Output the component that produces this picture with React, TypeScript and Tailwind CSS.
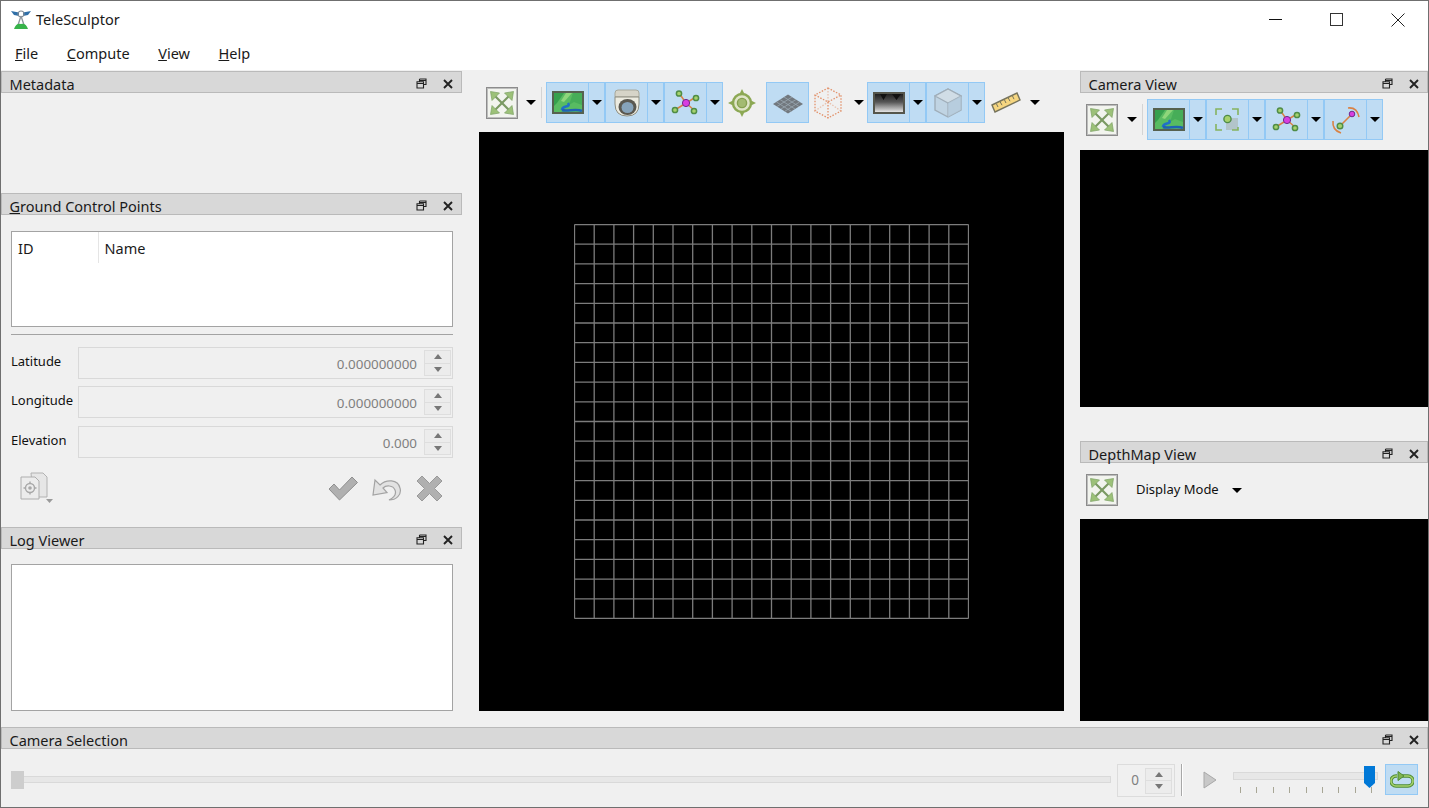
import React from 'react';

const FitIcon = () => (
  <svg width="32" height="32" viewBox="0 0 32 32" className="shrink-0">
    <rect x="0.5" y="0.5" width="31" height="31" fill="#f2f4ee" stroke="#8c8c8c" />
    <rect x="1.5" y="1.5" width="29" height="29" fill="none" stroke="#bdbdbd" />
    <g stroke="#7b9a63" strokeWidth="2.2" fill="none">
      <path d="M9 9 L23 23" />
      <path d="M23 9 L9 23" />
    </g>
    <g fill="#9cc178" stroke="#7da265" strokeWidth="0.7">
      <path d="M4.5 4.5 L13.5 6 L6 13.5 Z" />
      <path d="M27.5 4.5 L26 13.5 L18.5 6 Z" />
      <path d="M4.5 27.5 L6 18.5 L13.5 26 Z" />
      <path d="M27.5 27.5 L18.5 26 L26 18.5 Z" />
    </g>
  </svg>
);

const MapIcon = () => (
  <svg width="32" height="23" viewBox="0 0 32 23">
    <rect x="1" y="1" width="30" height="21" fill="#58bb62" stroke="#56614f" strokeWidth="2" />
    <path d="M2 2 L12 2 L5 12 L2 15 Z" fill="#36a04e" />
    <path d="M14 2 L20 2 L12 11 L9 10 Z" fill="#8ed67b" />
    <path d="M21 2 L30 2 L30 14 L22 11 L17 14 Z" fill="#46ad58" />
    <path d="M10 19 C10 14 19 17 16 12" fill="none" stroke="#2170c8" strokeWidth="2.6" />
    <path d="M10 19 C15 21 24 17 30 20" fill="none" stroke="#1f62b4" strokeWidth="2.6" />
  </svg>
);

const DomeIcon = () => (
  <svg width="28" height="28" viewBox="0 0 28 28">
    <path d="M2 4 Q2 1 5 1 L23 1 Q26 1 26 4 L26 8 L2 8 Z" fill="#d6d4c8" stroke="#a8a89a" />
    <path d="M2 8 L26 8 L26 15 Q26 27 14 27 Q2 27 2 15 Z" fill="#ecebe0" stroke="#8d8d80" />
    <ellipse cx="14.5" cy="18" rx="9" ry="8" fill="#5a5850" />
    <ellipse cx="14.5" cy="18.5" rx="6" ry="5.5" fill="#86a3ba" />
  </svg>
);

const NetworkIcon = () => (
  <svg width="30" height="26" viewBox="0 0 30 26">
    <g stroke="#d98245" strokeWidth="1.5">
      <path d="M15 13 L8 3" />
      <path d="M15 13 L25 7" />
      <path d="M15 13 L4 20" />
      <path d="M15 13 L24 21" />
    </g>
    <g fill="#a6d26d" stroke="#4f8c46" strokeWidth="1.5">
      <circle cx="8" cy="3.5" r="2.6" />
      <circle cx="25" cy="8" r="2.6" />
      <circle cx="4" cy="20" r="2.6" />
      <circle cx="23" cy="21" r="2.6" />
    </g>
    <circle cx="15" cy="13" r="3.6" fill="#d83ee0" stroke="#6e2a8a" />
  </svg>
);

const TargetIcon = () => (
  <svg width="28" height="28" viewBox="0 0 28 28">
    <g fill="#8ca854">
      <path d="M14 0 L17 6 L11 6 Z" />
      <path d="M14 28 L17 22 L11 22 Z" />
      <path d="M0 14 L6 11 L6 17 Z" />
      <path d="M28 14 L22 11 L22 17 Z" />
    </g>
    <circle cx="14" cy="14" r="9" fill="#dfe5c8" stroke="#8ca854" strokeWidth="2.4" />
    <circle cx="14" cy="14" r="4.6" fill="#a3bb72" stroke="#86a050" strokeWidth="1.4" />
  </svg>
);

const GridIcon = () => (
  <svg width="32" height="20" viewBox="0 0 32 20">
    <path d="M16 0.5 L31 10 L16 19.5 L1 10 Z" fill="#72787e" />
    <g stroke="#9aa8b3" strokeWidth="0.8">
      <path d="M12 3 L27 12.5" />
      <path d="M8 5.5 L23 15" />
      <path d="M4.5 8 L19.5 17.5" />
      <path d="M20 3 L5 12.5" />
      <path d="M24 5.5 L9 15" />
      <path d="M27.5 8 L12.5 17.5" />
    </g>
  </svg>
);

const WireCubeIcon = () => (
  <svg width="30" height="32" viewBox="0 0 30 32">
    <g fill="none" stroke="#e2916a" strokeWidth="1.3" strokeDasharray="1.5 1.5">
      <path d="M15 1 L28 8 L28 24 L15 31 L2 24 L2 8 Z" />
      <path d="M2 8 L15 15 L28 8" />
      <path d="M15 15 L15 31" />
      <path d="M15 1 L15 15 M2 24 L15 15 L28 24" opacity="0.5" />
    </g>
  </svg>
);

const DepthIcon = () => (
  <svg width="32" height="22" viewBox="0 0 32 22">
    <defs>
      <linearGradient id="depth" x1="0" y1="0" x2="0" y2="1">
        <stop offset="0" stopColor="#1a1a1a" />
        <stop offset="0.45" stopColor="#555" />
        <stop offset="1" stopColor="#f2f2f2" />
      </linearGradient>
    </defs>
    <rect x="1" y="1" width="30" height="20" fill="url(#depth)" stroke="#55564c" strokeWidth="2" />
    <path d="M7 2 L14 2 L10.5 8 Z M19 2 L28 2 L23.5 8 Z" fill="#111" />
  </svg>
);

const SolidCubeIcon = () => (
  <svg width="28" height="30" viewBox="0 0 28 30">
    <path d="M14 1 L27 8 L27 22 L14 29 L1 22 L1 8 Z" fill="#c0d4e3" stroke="#a0aeb9" strokeWidth="1.4" />
    <path d="M1 8 L14 15 L27 8 L14 1 Z" fill="#d0dde6" stroke="#a0aeb9" strokeWidth="1.2" />
    <path d="M14 15 L14 29" stroke="#a0aeb9" strokeWidth="1.2" />
    <path d="M14 15 L27 8 L27 22 L14 29 Z" fill="#b4cadb" opacity="0.7" />
  </svg>
);

const RulerIcon = () => (
  <svg width="30" height="22" viewBox="0 0 30 22">
    <path d="M1 13 L26 1 L29 8 L4 20 Z" fill="#f6d680" stroke="#77745c" strokeWidth="1.4" />
    <g stroke="#77745c" strokeWidth="1">
      <path d="M7 15 L5.5 12" />
      <path d="M11 13.2 L9 9.5" />
      <path d="M15 11 L13.5 8" />
      <path d="M19 9.2 L17 5.5" />
      <path d="M23 7.2 L21.5 4" />
    </g>
  </svg>
);

const FeatureIcon = () => (
  <svg width="28" height="26" viewBox="0 0 28 26">
    <rect x="12" y="11" width="12" height="12" fill="#a8b0a8" opacity="0.55" />
    <g fill="none" stroke="#86b35f" strokeWidth="1.6">
      <path d="M2 8 L2 2 L8 2" />
      <path d="M18 2 L24 2 L24 8" />
      <path d="M2 17 L2 23 L8 23" />
      <path d="M18 23 L24 23 L24 20" />
    </g>
    <circle cx="13.5" cy="12" r="3.6" fill="#a6d26d" stroke="#4f8c46" strokeWidth="1.4" />
  </svg>
);

const RangeIcon = () => (
  <svg width="30" height="28" viewBox="0 0 30 28">
    <path d="M17 2 Q26 1 28 11" fill="none" stroke="#d98245" strokeWidth="1.6" />
    <path d="M2 15 Q1 24 10 27" fill="none" stroke="#d98245" strokeWidth="1.6" />
    <path d="M9 20 L21 8" stroke="#d98245" strokeWidth="1.6" />
    <circle cx="9" cy="20" r="2.8" fill="#a6d26d" stroke="#4f8c46" strokeWidth="1.4" />
    <circle cx="21" cy="8" r="2.8" fill="#d83ee0" stroke="#6e2a8a" strokeWidth="1" />
  </svg>
);

const Caret = () => (
  <svg width="10" height="5" viewBox="0 0 10 5" className="shrink-0">
    <path d="M0 0 L10 0 L5 5 Z" fill="#000" />
  </svg>
);

const DockTitle = ({ title, underlineFirst }: { title: string; underlineFirst?: boolean }) => (
  <div className="h-[22px] shrink-0 flex items-start border border-[#bababa] bg-[#d8d8d8]">
    <span className="ml-[7.5px] mt-[2px] text-[14.5px] leading-[20px] text-[#1a1a1a] whitespace-nowrap">
      {underlineFirst ? (
        <>
          <span className="underline">{title[0]}</span>
          {title.slice(1)}
        </>
      ) : (
        title
      )}
    </span>
    <div className="ml-auto flex items-center gap-[16px] mr-[8px] mt-[6px]">
      <svg width="11" height="11" viewBox="0 0 11 11">
        <path d="M3.5 1 H10 V6.5 H8 M1 3.8 H7.5 V10 H1 Z M1 5.5 H7.5 M3.5 1 V3.5 M3.5 2.5 H10" fill="none" stroke="#222" strokeWidth="1.1" />
      </svg>
      <svg width="10" height="10" viewBox="0 0 10 10">
        <path d="M1 1 L9 9 M9 1 L1 9" stroke="#222" strokeWidth="1.9" />
      </svg>
    </div>
  </div>
);

// checked tool button with its menu arrow
const CheckedButton = ({ icon }: { icon: React.ReactNode }) => (
  <div className="flex h-[41px] bg-[#bfdcf3] border border-[#93c9f5] w-[59px] shrink-0">
    <div className="w-[42px] flex items-center justify-center border-r border-[#93c9f5]">{icon}</div>
    <div className="flex-1 flex items-center justify-center">
      <Caret />
    </div>
  </div>
);

const Spin = () => (
  <div className="w-[27px] h-[26px] flex flex-col border border-[#dedede] bg-[#ececec]">
    <div className="flex-1 flex items-center justify-center border-b border-[#dedede]">
      <svg width="8" height="5" viewBox="0 0 8 5">
        <path d="M4 0 L8 5 L0 5 Z" fill="#777" />
      </svg>
    </div>
    <div className="flex-1 flex items-center justify-center">
      <svg width="8" height="5" viewBox="0 0 8 5">
        <path d="M0 0 L8 0 L4 5 Z" fill="#777" />
      </svg>
    </div>
  </div>
);

const CoordRow = ({ label, value, className }: { label: string; value: string; className?: string }) => (
  <div className={`flex items-start h-[32px] ${className ?? ''}`}>
    <span className="w-[67px] shrink-0 text-[13px] leading-[20px] mt-[4px] text-[#111] whitespace-nowrap">{label}</span>
    <div className="flex items-center justify-end w-[375px] h-[32px] shrink-0 border border-[#d9d9d9] bg-[#f0f0f0] pr-[1px]">
      <span className="text-[13.4px] text-[#7f7f7f] mr-[7px] mt-[2px]">{value}</span>
      <Spin />
    </div>
  </div>
);

const CoordGrid = () => {
  const lines = Array.from({ length: 21 }, (_, i) => 0.5 + i * 19.7);
  return (
    <svg width="395" height="395" viewBox="0 0 395 395">
      {lines.map((p) => (
        <g key={p} stroke="#7c7c7c" strokeWidth="1.3">
          <path d={`M${p} 0.5 V394.5`} />
          <path d={`M0.5 ${p} H394.5`} />
        </g>
      ))}
    </svg>
  );
};

export default function App() {
  return (
    <div
      className="w-[1429px] h-[808px] flex flex-col overflow-hidden border border-[#6f6f6f] bg-[#f0f0f0] text-[#1a1a1a]"
      style={{ fontFamily: '"Noto Sans", "Open Sans", sans-serif' }}
    >
      {/* Title bar */}
      <div className="h-[35px] shrink-0 bg-white flex items-center pt-[2px]">
        <svg width="20" height="20" viewBox="0 0 20 20" className="ml-[10px]">
          <path d="M0 1 L8 2.5 L8 6 L3 5 Z M20 1 L12 2.5 L12 6 L17 5 Z" fill="#2f6fa8" />
          <circle cx="10" cy="4" r="3" fill="none" stroke="#7d8a96" strokeWidth="1.2" />
          <path d="M10 6 L7 15 M10 6 L13 15" stroke="#8b949c" strokeWidth="1.3" />
          <path d="M3 19 Q5 13 10 14 Q15 13 17 19 Z" fill="#37b34a" />
        </svg>
        <span className="ml-[5px] text-[14.5px] text-[#1a1a1a]">TeleSculptor</span>
        <div className="ml-auto flex items-center">
          <div className="w-[61px] flex justify-center">
            <div className="w-[13px] h-px bg-[#111]" />
          </div>
          <div className="w-[61px] flex justify-center">
            <div className="w-[13px] h-[13px] border border-[#333]" />
          </div>
          <div className="w-[61px] flex justify-center">
            <svg width="14" height="14" viewBox="0 0 14 14">
              <path d="M0.5 0.5 L13.5 13.5 M13.5 0.5 L0.5 13.5" stroke="#222" strokeWidth="1" />
            </svg>
          </div>
        </div>
      </div>

      {/* Menu bar */}
      <div className="h-[34px] shrink-0 bg-white flex items-center pl-[14px] gap-[28.6px] text-[14.5px] pt-[2px]">
        {['File', 'Compute', 'View', 'Help'].map((m) => (
          <span key={m}>
            <span className="underline">{m[0]}</span>
            {m.slice(1)}
          </span>
        ))}
      </div>

      <div className="h-[657px] shrink-0 flex">
        {/* Left docks */}
        <div className="w-[461px] mr-px shrink-0 flex flex-col pt-px">
          <DockTitle title="Metadata" />
          <div className="h-[100px] shrink-0" />
          <DockTitle title="Ground Control Points" underlineFirst />
          <div className="h-[312px] shrink-0 pl-[10px] pr-[9px] pt-[16px] flex flex-col">
            <div className="h-[96px] shrink-0 bg-white border border-[#a3a3a3] flex items-start">
              <div className="w-[87px] h-[31px] border-r border-[#e5e5e5] pl-[6px] pt-[6px] text-[14.5px] leading-[20px]">ID</div>
              <div className="pl-[5.5px] pt-[6px] text-[14.5px] leading-[20px]">Name</div>
            </div>
            <div className="h-px shrink-0 bg-[#a3a3a3] mt-[7px]" />
            <CoordRow label="Latitude" value="0.000000000" className="mt-[12px]" />
            <CoordRow label="Longitude" value="0.000000000" className="mt-[7px]" />
            <CoordRow label="Elevation" value="0.000" className="mt-[8px]" />
            <div className="flex items-start mt-[14px] pl-[9px]">
              <div className="relative">
                <svg width="28" height="28" viewBox="0 0 28 28">
                  <path d="M11 1 H23 L27 5 V25 H13 Z" fill="#e6e6e6" stroke="#b2b2b2" />
                  <path d="M1 5 H15 L19 9 V27 H1 Z" fill="#ececec" stroke="#aeaeae" />
                  <circle cx="10" cy="16" r="4.5" fill="none" stroke="#a8a8a8" strokeWidth="1.4" />
                  <circle cx="10" cy="16" r="1.8" fill="#a8a8a8" />
                  <path d="M10 9.5 V11.5 M10 20.5 V22.5 M3.5 16 H5.5 M14.5 16 H16.5" stroke="#a8a8a8" strokeWidth="1.4" />
                </svg>
                <svg width="7" height="4" viewBox="0 0 7 4" className="absolute left-[26px] top-[27px]">
                  <path d="M0 0 H7 L3.5 4 Z" fill="#9a9a9a" />
                </svg>
              </div>
              <div className="ml-auto flex items-center gap-[14px] mr-[10px] mt-[3px]">
                <svg width="30" height="25" viewBox="0 0 30 25">
                  <path d="M1 13 L6 8 L11.5 14 L24 1 L29.5 6.5 L11.5 24 Z" fill="#b0b0b0" stroke="#8f8f8f" />
                </svg>
                <svg width="30" height="24" viewBox="0 0 30 24">
                  <path d="M1 18 L3 3 L8 8 C14 2 26 2 28 11 C30 18 24 23 17 23 C21 21 25 18 23 13 C21 8 14 8 11 11 L15 15.5 Z" fill="#e2e2e2" stroke="#a3a3a3" strokeWidth="1.2" />
                </svg>
                <svg width="27" height="27" viewBox="0 0 27 27">
                  <path d="M1 6 L6 1 L13.5 8.5 L21 1 L26 6 L18.5 13.5 L26 21 L21 26 L13.5 18.5 L6 26 L1 21 L8.5 13.5 Z" fill="#b0b0b0" stroke="#999" />
                </svg>
              </div>
            </div>
          </div>
          <DockTitle title="Log Viewer" />
          <div className="pl-[10px] pr-[9px] pt-[15px]">
            <div className="h-[147px] bg-white border border-[#a3a3a3]" />
          </div>
        </div>

        {/* Center view */}
        <div className="w-[585px] shrink-0 ml-[16px] flex flex-col">
          <div className="h-[41px] mt-[12px] shrink-0 flex items-center">
            <div className="ml-[7px]">
              <FitIcon />
            </div>
            <div className="w-[18px] flex justify-end shrink-0">
              <Caret />
            </div>
            <div className="w-px h-[31px] bg-[#d4d4d4] ml-[5px] shrink-0" />
            <div className="flex ml-[4px] shrink-0">
              <CheckedButton icon={<MapIcon />} />
              <CheckedButton icon={<DomeIcon />} />
              <CheckedButton icon={<NetworkIcon />} />
            </div>
            <div className="ml-[5px] shrink-0">
              <TargetIcon />
            </div>
            <div className="w-[43px] h-[41px] ml-[10px] shrink-0 bg-[#bfdcf3] border border-[#93c9f5] flex items-center justify-center pt-[3px]">
              <GridIcon />
            </div>
            <div className="ml-[4px] shrink-0">
              <WireCubeIcon />
            </div>
            <div className="ml-[11px] shrink-0">
              <Caret />
            </div>
            <div className="flex ml-[3px] shrink-0">
              <CheckedButton icon={<DepthIcon />} />
              <CheckedButton icon={<SolidCubeIcon />} />
            </div>
            <div className="ml-[6px] shrink-0">
              <RulerIcon />
            </div>
            <div className="ml-[9px] shrink-0">
              <Caret />
            </div>
          </div>
          <div className="h-[579px] mt-[9px] shrink-0 bg-black flex items-center justify-center pr-px">
            <CoordGrid />
          </div>
        </div>

        {/* Right docks */}
        <div className="w-[348px] shrink-0 ml-[16px] flex flex-col pt-px">
          <DockTitle title="Camera View" />
          <div className="h-[41px] mt-[6px] shrink-0 flex items-center">
            <div className="ml-[6px]">
              <FitIcon />
            </div>
            <div className="w-[19px] flex justify-end shrink-0">
              <Caret />
            </div>
            <div className="w-px h-[31px] bg-[#d4d4d4] ml-[5px] shrink-0" />
            <div className="flex ml-[4px] shrink-0">
              <CheckedButton icon={<MapIcon />} />
              <CheckedButton icon={<FeatureIcon />} />
              <CheckedButton icon={<NetworkIcon />} />
              <CheckedButton icon={<RangeIcon />} />
            </div>
          </div>
          <div className="h-[257px] mt-[10px] shrink-0 bg-black" />
          <div className="h-[34px] shrink-0" />
          <DockTitle title="DepthMap View" />
          <div className="h-[56px] shrink-0 flex items-center pb-[2px]">
            <div className="ml-[6px]">
              <FitIcon />
            </div>
            <span className="ml-[18px] text-[13px] text-[#111] whitespace-nowrap">Display Mode</span>
            <div className="ml-[13px]">
              <Caret />
            </div>
          </div>
          <div className="h-[202px] shrink-0 bg-black" />
        </div>
      </div>

      {/* Camera selection dock */}
      <div className="flex-1 flex flex-col">
        <DockTitle title="Camera Selection" />
        <div className="flex-1 flex items-start pl-[10px] pt-[15px]">
          <div className="relative w-[1100px] h-[32px] shrink-0 flex items-center">
            <div className="w-full h-[7px] mb-[1px] bg-[#e7e7e7] border border-[#d9d9d9]" />
            <div className="absolute left-0 top-[7px] w-[13px] h-[18px] bg-[#cdcdcd]" />
          </div>
          <div className="w-[58px] h-[33px] ml-[6px] shrink-0 border border-[#dcdcdc] flex items-center justify-end pr-[2px]">
            <span className="text-[13.5px] text-[#7f7f7f] mr-[6px]">0</span>
            <Spin />
          </div>
          <div className="w-[2px] h-[32px] ml-[6px] shrink-0 bg-[#a8a8a8] border-r border-white" />
          <svg width="14" height="18" viewBox="0 0 14 18" className="ml-[20px] mt-[7px] shrink-0">
            <path d="M1 1 L13 9 L1 17 Z" fill="#c8c8c8" stroke="#a8a8a8" />
          </svg>
          <div className="relative w-[145px] h-[32px] ml-[16px] shrink-0">
            <div className="absolute left-0 right-0 top-[8px] h-[8px] bg-[#e7e7e7] border border-[#d9d9d9]" />
            <svg width="13" height="22" viewBox="0 0 13 22" className="absolute left-[130px] top-[2px]">
              <path d="M1 0 H12 V17 L6.5 22 L1 17 Z" fill="#0078d7" />
            </svg>
            <div className="absolute left-[7px] top-[23px] flex gap-[15.4px]">
              {[0, 1, 2, 3, 4, 5, 6, 7, 8].map((t) => (
                <div key={t} className="w-px h-[6px] bg-[#a8a695]" />
              ))}
            </div>
          </div>
          <div className="w-[33px] h-[31px] ml-[7px] shrink-0 bg-[#bfdcf3] border border-[#93c9f5] flex items-center justify-center">
            <svg width="24" height="18" viewBox="0 0 24 18">
              <path d="M7 5 H6 A5 5 0 0 0 6 15 H18 A5 5 0 0 0 18 5 H12" fill="none" stroke="#4f8c34" strokeWidth="3.4" />
              <path d="M7 5 H6 A5 5 0 0 0 6 15 H18 A5 5 0 0 0 18 5 H12" fill="none" stroke="#a6d26d" strokeWidth="1.6" />
              <path d="M8 0.5 L14 5 L8 9.5 Z" fill="#7fb34f" stroke="#4f8c34" />
            </svg>
          </div>
        </div>
      </div>
    </div>
  );
}
